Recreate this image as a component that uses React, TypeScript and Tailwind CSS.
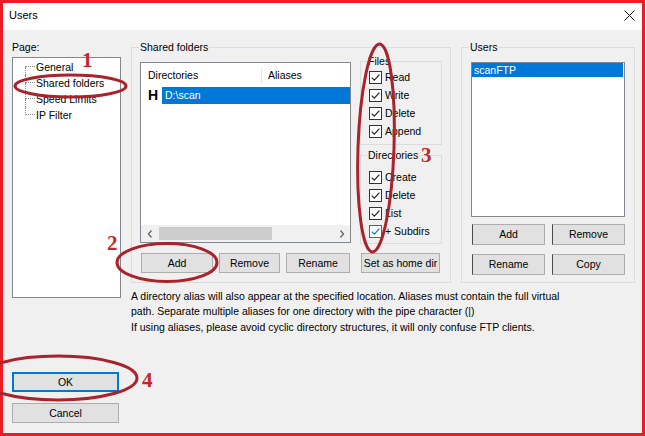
import React from "react";

const tree = ["General", "Shared folders", "Speed Limits", "IP Filter"];
const fileRights = ["Read", "Write", "Delete", "Append"];
const dirRights = ["Create", "Delete", "List", "+ Subdirs"];

const Btn = ({
  label,
  className = "",
  tone = "plain",
}: {
  label: string;
  className?: string;
  tone?: "plain" | "default" | "edge";
}) => {
  const border =
    tone === "default"
      ? "border-2 border-[#0078d7]"
      : tone === "edge"
        ? "border border-[#adadad] border-l-[#4a4a4a]"
        : "border border-[#adadad]";
  return (
    <div className={`flex items-center justify-center bg-[#e1e1e1] leading-none ${border} ${className}`}>
      {label}
    </div>
  );
};

const Check = ({ label, focus = false }: { label: string; focus?: boolean }) => (
  <div className="flex h-[18px] items-center">
    <div
      className={
        focus
          ? "flex h-[13px] w-[13px] items-center justify-center border border-[#0078d7] bg-white"
          : "flex h-[13px] w-[13px] items-center justify-center border border-[#333333] bg-white"
      }
    >
      <svg width="11" height="11" viewBox="0 0 11 11">
        <path
          d="M1.8 5.6 L4.3 8.1 L9.4 2.6"
          fill="none"
          stroke={focus ? "#0078d7" : "#222222"}
          strokeWidth="1.2"
        />
      </svg>
    </div>
    <span className="ml-[3px] leading-[14px]">{label}</span>
  </div>
);

const Chevron = ({ right = false }: { right?: boolean }) => (
  <svg width="6" height="8" viewBox="0 0 6 8">
    <polyline
      points={right ? "1.5,0.5 4.5,4 1.5,7.5" : "4.5,0.5 1.5,4 4.5,7.5"}
      fill="none"
      stroke="#606060"
      strokeWidth="1.2"
    />
  </svg>
);

export default function App() {
  return (
    <div className="relative h-[436px] w-[645px] font-['Liberation_Sans',Arial,sans-serif] text-[10.5px] text-black">
      <div className="flex h-full w-full flex-col border-[3px] border-[#ed1c24] bg-[#f0f0f0]">
        {/* title bar */}
        <div className="flex h-[27px] items-start justify-between bg-white pl-[6px] pr-[7px] pt-[5px]">
          <span className="text-[11px] leading-[14px]">Users</span>
          <svg className="mt-[2px]" width="11" height="11" viewBox="0 0 11 11">
            <path d="M0.5 0.5 L10.5 10.5 M10.5 0.5 L0.5 10.5" stroke="#111111" strokeWidth="1" />
          </svg>
        </div>

        <div className="flex flex-1 pl-[9px] pt-[10px]">
          {/* left column */}
          <div className="flex w-[109px] flex-col">
            <span className="leading-[14px]">Page:</span>
            <div className="mt-[3px] h-[241px] border border-[#828790] bg-white pt-px">
              <div className="pl-[12px]">
                {tree.map((t, i) => (
                  <div key={t} className="flex h-[16px] items-stretch">
                    <div className="flex w-[10px] flex-col">
                      <div
                        className={
                          i === 0
                            ? "h-[8px] border-b border-dotted border-[#8a8a8a]"
                            : "h-[8px] border-b border-l border-dotted border-[#8a8a8a]"
                        }
                      />
                      <div
                        className={
                          i === tree.length - 1 ? "flex-1" : "flex-1 border-l border-dotted border-[#8a8a8a]"
                        }
                      />
                    </div>
                    <span className="ml-px leading-[16px]">{t}</span>
                  </div>
                ))}
              </div>
            </div>
            <Btn label="OK" tone="default" className="mt-[74px] h-[20px] w-[107px]" />
            <Btn label="Cancel" className="mt-[11px] h-[20px] w-[107px]" />
          </div>

          {/* right area */}
          <div className="ml-[10px] flex w-[504px] flex-col">
            <div className="flex gap-[10px]">
              {/* shared folders */}
              <fieldset className="w-[320px] border border-[#dcdcdc] p-0">
                <legend className="ml-[7px] px-px leading-[14px]">Shared folders</legend>
                <div className="flex pb-[9px] pl-[8px]">
                  <div className="flex w-[211px] flex-col">
                    <div className="mt-[8px] flex h-[181px] flex-col border border-[#828790] bg-white">
                      <div className="flex h-[21px] pt-[5px]">
                        <div className="w-[121px] border-r border-[#e5e5e5] pl-[7px] leading-[14px]">Directories</div>
                        <div className="pl-[6px] leading-[14px]">Aliases</div>
                      </div>
                      <div className="mt-[3px] flex h-[17px] items-stretch">
                        <div className="w-[21px] pl-[7px] text-[14px] font-bold leading-[17px]">H</div>
                        <div className="flex-1 bg-[#0078d7] pl-[3px] leading-[17px] text-white">D:\scan</div>
                      </div>
                      <div className="flex-1" />
                      <div className="flex h-[17px] items-stretch bg-[#f0f0f0]">
                        <div className="flex w-[17px] items-center justify-center">
                          <Chevron />
                        </div>
                        <div className="my-[2px] ml-px w-[113px] bg-[#cdcdcd]" />
                        <div className="flex-1" />
                        <div className="flex w-[17px] items-center justify-center">
                          <Chevron right />
                        </div>
                      </div>
                    </div>
                    <div className="mt-[10px] flex h-[20px] gap-[6px] pl-px">
                      <Btn label="Add" className="w-[72px]" />
                      <Btn label="Remove" className="w-[61px]" />
                      <Btn label="Rename" className="w-[64px]" />
                    </div>
                  </div>

                  <div className="ml-[9px] flex w-[82px] flex-col">
                    <fieldset className="border border-[#dcdcdc] p-0">
                      <legend className="ml-[6px] px-px leading-[14px]">Files</legend>
                      <div className="pb-[4px] pl-[8px]">
                        {fileRights.map((r) => (
                          <Check key={r} label={r} />
                        ))}
                      </div>
                    </fieldset>
                    <fieldset className="mt-[3px] border border-[#dcdcdc] p-0">
                      <legend className="ml-[6px] px-px leading-[14px]">Directories</legend>
                      <div className="pb-[3px] pl-[8px] pt-[6px]">
                        {dirRights.map((r, i) => (
                          <Check key={r} label={r} focus={i === 3} />
                        ))}
                      </div>
                    </fieldset>
                    <Btn label="Set as home dir" className="ml-px mt-[9px] h-[20px] w-[79px]" />
                  </div>
                </div>
              </fieldset>

              {/* users */}
              <fieldset className="w-[174px] border border-[#dcdcdc] p-0">
                <legend className="ml-[7px] px-px leading-[14px]">Users</legend>
                <div className="pb-[7px] pl-[9px] pr-[9px]">
                  <div className="mt-[8px] h-[155px] border border-[#828790] bg-white">
                    <div className="mr-px h-[14px] bg-[#0078d7] pl-[2px] leading-[14px] text-white">scanFTP</div>
                  </div>
                  <div className="mt-[7px] grid grid-cols-2 gap-x-[7px] gap-y-[9px] pl-px">
                    <Btn label="Add" tone="edge" className="h-[21px]" />
                    <Btn label="Remove" tone="edge" className="h-[21px]" />
                    <Btn label="Rename" tone="edge" className="h-[21px]" />
                    <Btn label="Copy" tone="edge" className="h-[21px]" />
                  </div>
                </div>
              </fieldset>
            </div>

            <p className="mt-[6px] whitespace-nowrap leading-[15px]">
              A directory alias will also appear at the specified location. Aliases must contain the full virtual
              <br />
              path. Separate multiple aliases for one directory with the pipe character (|)
            </p>
            <p className="mt-px whitespace-nowrap leading-[15px]">
              If using aliases, please avoid cyclic directory structures, it will only confuse FTP clients.
            </p>
          </div>
        </div>
      </div>

      {/* red annotations */}
      <svg className="pointer-events-none absolute inset-0" width="645" height="436" viewBox="0 0 645 436">
        <g fill="none" stroke="#a8232c" strokeWidth="3">
          <ellipse cx="70.5" cy="86" rx="55.5" ry="11" />
          <ellipse cx="167" cy="262.5" rx="50" ry="19" />
          <ellipse cx="376" cy="148" rx="18" ry="104" transform="rotate(2 376 148)" />
          <ellipse cx="58" cy="378" rx="79" ry="22" />
        </g>
        <g fill="#c1272d" fontFamily="'Liberation Serif', serif" fontWeight="bold" fontSize="21">
          <text x="82" y="67">1</text>
          <text x="107" y="250">2</text>
          <text x="421" y="162">3</text>
          <text x="142" y="387">4</text>
        </g>
      </svg>
    </div>
  );
}
